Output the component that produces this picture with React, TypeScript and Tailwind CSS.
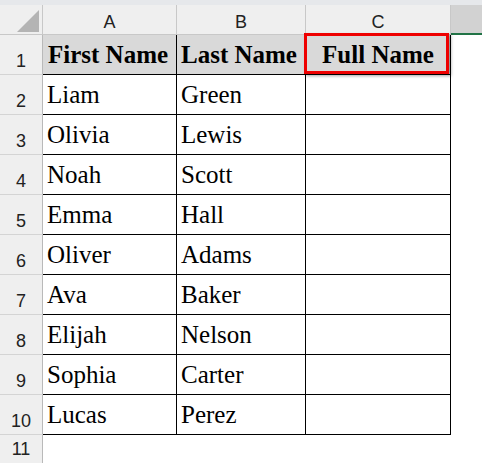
const rows: [string, string][] = [
  ['Liam', 'Green'],
  ['Olivia', 'Lewis'],
  ['Noah', 'Scott'],
  ['Emma', 'Hall'],
  ['Oliver', 'Adams'],
  ['Ava', 'Baker'],
  ['Elijah', 'Nelson'],
  ['Sophia', 'Carter'],
  ['Lucas', 'Perez'],
];

const sans = "font-['Liberation_Sans',Arial,sans-serif]";
const serif = "font-['Liberation_Serif','Times_New_Roman',serif]";

function RowHead({ n, h = 'h-[40px]' }: { n: number; h?: string }) {
  return (
    <div
      className={`${h} w-[43px] shrink-0 box-border bg-[#efefef] border-r border-b border-r-[#b9b9b9] border-b-[#d4d4d4] flex items-end justify-center pb-[4px] text-[18px] leading-none text-[#222] ${sans}`}
    >
      {n}
    </div>
  );
}

export default function App() {
  return (
    <div className="w-[482px] h-[463px] overflow-hidden bg-white">
      <div className="h-[5px] bg-[#e6e8eb]" />

      {/* column headers */}
      <div className={`flex h-[30px] text-[18px] leading-none text-[#222] ${sans}`}>
        <div className="w-[43px] shrink-0 box-border bg-[#efefef] border-r border-b border-[#c8c8c8] relative">
          <svg className="absolute left-0 top-0" width="43" height="30">
            <polygon points="17,27 39,5 39,27" fill="#b4b4b4" />
          </svg>
        </div>
        <div className="w-[134px] shrink-0 box-border bg-[#efefef] border-r border-b border-[#c8c8c8] flex items-center justify-center pt-[5px]">
          A
        </div>
        <div className="w-[129px] shrink-0 box-border bg-[#efefef] border-r border-b border-[#c8c8c8] flex items-center justify-center pt-[5px]">
          B
        </div>
        <div className="w-[145px] shrink-0 box-border bg-[#efefef] border-r border-b border-[#c8c8c8] flex items-center justify-center pt-[5px]">
          C
        </div>
        <div className="flex-1 box-border bg-[#d2d2d2] border-b-2 border-[#217346]" />
      </div>

      {/* row 1: titles */}
      <div className={`flex text-[25px] leading-none text-black ${serif}`}>
        <RowHead n={1} />
        <div className="w-[134px] h-[40px] shrink-0 box-border bg-[#d9d9d9] border-r border-b border-black flex items-end pl-[5px] pb-[7px] font-bold">
          First Name
        </div>
        <div className="w-[129px] h-[40px] shrink-0 box-border bg-[#d9d9d9] border-r border-b border-black flex items-end pl-[4px] pb-[7px] font-bold">
          Last Name
        </div>
        <div className="w-[145px] h-[40px] shrink-0 box-border bg-[#d9d9d9] border-r border-b border-black flex items-end justify-center pb-[7px] font-bold relative">
          Full Name
          <div className="absolute -left-[2px] -top-[2px] right-[1px] bottom-0 border-[3px] border-[#ee0000] shadow-[2px_2px_3px_rgba(0,0,0,0.35)]" />
        </div>
      </div>

      {rows.map(([first, last], i) => (
        <div key={first} className={`flex text-[25px] leading-none text-black ${serif}`}>
          <RowHead n={i + 2} />
          <div className="w-[134px] h-[40px] shrink-0 box-border border-r border-b border-black flex items-end pl-[4px] pb-[7px]">
            {first}
          </div>
          <div className="w-[129px] h-[40px] shrink-0 box-border border-r border-b border-black flex items-end pl-[4px] pb-[7px]">
            {last}
          </div>
          <div className="w-[145px] h-[40px] shrink-0 box-border border-r border-b border-black" />
        </div>
      ))}

      <div className="flex">
        <div
          className={`h-[28px] w-[43px] shrink-0 box-border bg-[#efefef] border-r border-r-[#b9b9b9] flex items-end justify-center pb-[5px] text-[18px] leading-none text-[#222] ${sans}`}
        >
          11
        </div>
      </div>
    </div>
  );
}
